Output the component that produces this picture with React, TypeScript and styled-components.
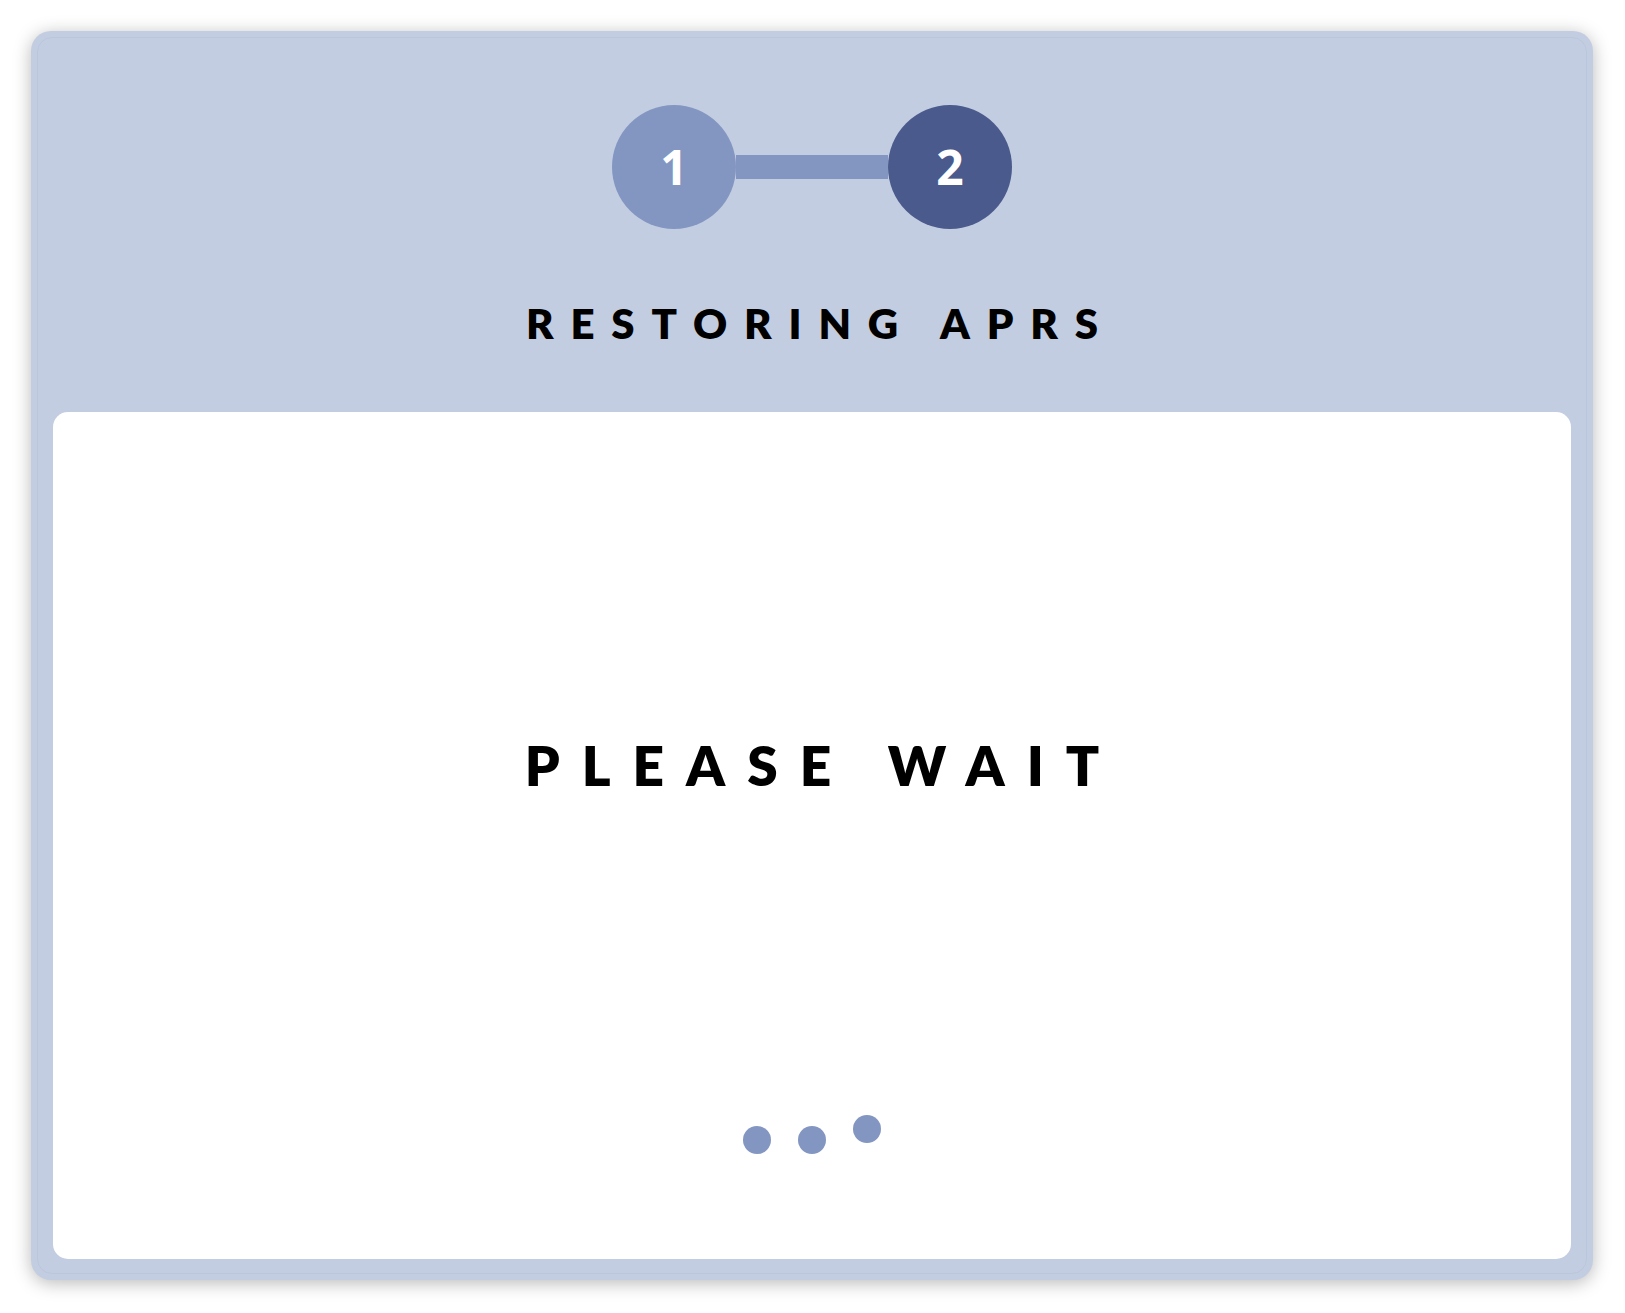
import React from 'react';
import styled, { createGlobalStyle } from 'styled-components';

const GlobalStyle = createGlobalStyle`
  html, body {
    margin: 0;
    padding: 0;
    background: #ffffff;
  }
  body {
    font-family: Lato, "Open Sans", Arial, sans-serif;
  }
`;

const STEPS = [1, 2];
const CURRENT_STEP = 2;

const App: React.FC = () => {
  return (
    <>
      <GlobalStyle />
      <Page>
        <Card>
          <Frame>
            <Stepper>
              {STEPS.map((step, i) => (
                <React.Fragment key={step}>
                  {i > 0 && <Connector />}
                  <StepCircle active={step === CURRENT_STEP}>{step}</StepCircle>
                </React.Fragment>
              ))}
            </Stepper>
            <StepTitle>Restoring APRs</StepTitle>
            <Panel>
              <WaitText>Please wait</WaitText>
              <Dots>
                <Dot />
                <Dot />
                <Dot lifted />
              </Dots>
            </Panel>
          </Frame>
        </Card>
      </Page>
    </>
  );
};

const Page = styled.div`
  box-sizing: border-box;
  min-height: 100vh;
  padding: 31px 32px 33px 31px;
  display: flex;
`;

const Card = styled.div`
  flex: 1;
  display: flex;
  padding: 6px;
  background: #c3cde1;
  border-radius: 20px;
  box-shadow: 0 3px 18px rgba(0, 0, 0, 0.28);
`;

const Frame = styled.div`
  flex: 1;
  display: flex;
  flex-direction: column;
  align-items: stretch;
  padding: 67px 15px 14px 15px;
  border: 1px solid rgba(110, 125, 165, 0.09);
  border-radius: 15px;
`;

const Stepper = styled.div`
  display: flex;
  align-items: center;
  justify-content: center;
`;

const StepCircle = styled.div<{ active?: boolean }>`
  width: 124px;
  height: 124px;
  border-radius: 50%;
  display: flex;
  align-items: center;
  justify-content: center;
  background: ${(p) => (p.active ? '#4a5a8c' : '#8396c2')};
  color: #ffffff;
  font-family: "Open Sans", sans-serif;
  font-weight: 700;
  font-size: 48px;
  line-height: 1;
`;

const Connector = styled.div`
  width: 152px;
  height: 24px;
  background: #8396c2;
`;

const StepTitle = styled.h2`
  margin: 73px 0 68px;
  padding-left: 0.4em;
  text-align: center;
  font-family: Lato, sans-serif;
  font-weight: 800;
  font-size: 42px;
  line-height: 1;
  letter-spacing: 0.4em;
  text-transform: uppercase;
  color: #000000;
`;

const Panel = styled.div`
  flex: 1;
  display: flex;
  flex-direction: column;
  align-items: center;
  padding-top: 326px;
  background: #ffffff;
  border-radius: 15px;
`;

const WaitText = styled.h1`
  margin: 0;
  padding-left: 0.4em;
  font-family: Lato, sans-serif;
  font-weight: 800;
  font-size: 55px;
  line-height: 1;
  letter-spacing: 0.4em;
  text-transform: uppercase;
  color: #000000;
`;

const Dots = styled.div`
  display: flex;
  align-items: center;
  gap: 27px;
  margin-top: 333px;
`;

const Dot = styled.span<{ lifted?: boolean }>`
  width: 28px;
  height: 28px;
  border-radius: 50%;
  background: #8396c2;
  transform: translateY(${(p) => (p.lifted ? '-11px' : '0')});
`;

export default App;
